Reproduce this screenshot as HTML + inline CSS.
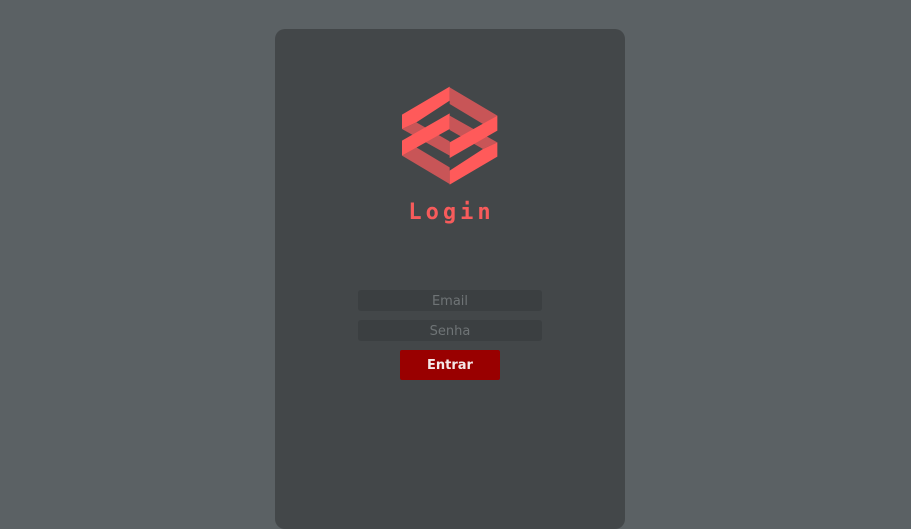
<!DOCTYPE html>
<html><head><meta charset="utf-8"><style>
html,body{margin:0;padding:0;width:911px;height:526px;background:#5b6164;overflow:hidden;font-family:"Liberation Sans",sans-serif}
.card{position:absolute;left:275px;top:29px;width:350px;height:500px;background:#434749;border-radius:10px}
.logo{position:absolute;left:398px;top:84px}
.title{position:absolute;left:-4px;width:911px;top:200px;text-align:center;font-family:"DejaVu Sans Mono",monospace;font-weight:bold;font-size:22px;letter-spacing:4px;color:#f75b5b}
.inp{position:absolute;left:358px;width:184px;height:21px;background:#3b3f41;border-radius:3px;color:#6f7476;font-family:"DejaVu Sans",sans-serif;font-size:13px;text-align:center;line-height:23px}
.btn{position:absolute;left:400px;top:350px;width:100px;height:30px;background:#990000;border-radius:2px;color:#f4e8e8;font-family:"DejaVu Sans",sans-serif;font-weight:bold;font-size:13px;text-align:center;line-height:31px}
</style></head><body>
<div class="card"></div>
<svg class="logo" width="104" height="104" viewBox="0 0 312 312">
<g fill="#c85557">
<polygon points="12,135 55,115 155,172 155,215"/>
<polygon points="12,215 55,190 155,250 155,300"/>
<polygon points="298,175 255,195 155,138 155,95"/>
<polygon points="298,95 255,120 155,60 155,10"/>
</g>
<g fill="#ff5a5a">
<polygon points="12,92 155,8 155,50 55,115 12,135"/>
<polygon points="12,170 155,88 155,135 12,215"/>
<polygon points="298,218 155,302 155,260 255,195 298,175"/>
<polygon points="298,140 155,222 155,175 298,95"/>
</g>
</svg>
<div class="title">Login</div>
<div class="inp" style="top:290px">Email</div>
<div class="inp" style="top:320px">Senha</div>
<div class="btn">Entrar</div>
</body></html>
